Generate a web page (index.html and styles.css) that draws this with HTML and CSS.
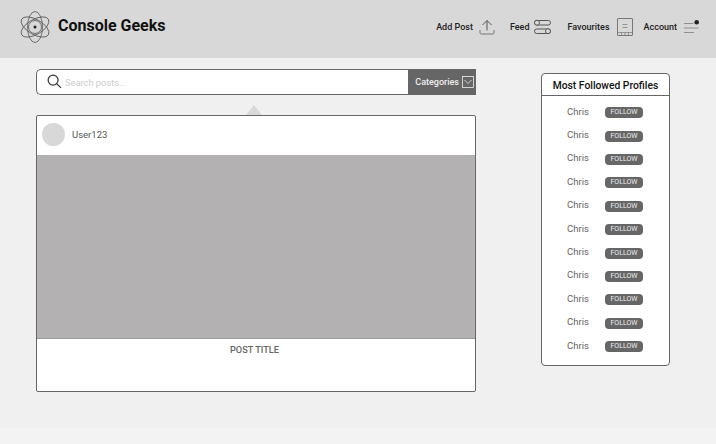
FILE: index.html
```html
<!DOCTYPE html>
<html lang="en">
<head>
<meta charset="utf-8">
<title>Console Geeks</title>
<link rel="stylesheet" href="styles.css">
</head>
<body>
<div class="page">
  <header class="topbar">
    <div class="brand">
      <svg class="logo" width="32" height="32" viewBox="0 0 32 32" fill="none" stroke="#555" stroke-width="0.8">
        <ellipse cx="16" cy="16" rx="15.5" ry="7.5" transform="rotate(90 16 16)"/>
        <ellipse cx="16" cy="16" rx="15.5" ry="7.5" transform="rotate(30 16 16)"/>
        <ellipse cx="16" cy="16" rx="15.5" ry="7.5" transform="rotate(150 16 16)"/>
        <circle cx="16" cy="16" r="6.5"/>
        <circle cx="16" cy="16" r="1.5" fill="#222" stroke="none"/>
      </svg>
      <span class="brand-name">Console Geeks</span>
    </div>
    <nav class="nav">
      <a class="nav-item nav-add">Add Post
        <svg width="16" height="16" viewBox="0 0 16 16" fill="none" stroke="#555" stroke-width="1">
          <path d="M8 11.5V1.5M3.5 6L8 1.5L12.5 6"/>
          <path d="M1 11v3a1.2 1.2 0 0 0 1.2 1h11.6a1.2 1.2 0 0 0 1.2-1v-3" stroke="#777"/>
        </svg>
      </a>
      <a class="nav-item nav-feed">Feed
        <svg width="17" height="16" viewBox="0 0 17 16" fill="none" stroke="#555" stroke-width="1">
          <rect x="0.5" y="1.5" width="16" height="4.5" rx="2.2"/>
          <circle cx="3" cy="3.7" r="2.5" fill="#d8d8d8"/>
          <rect x="0.5" y="10" width="16" height="4.5" rx="2.2"/>
          <circle cx="14" cy="12.2" r="2.5" fill="#d8d8d8"/>
        </svg>
      </a>
      <a class="nav-item nav-fav">Favourites
        <svg width="16" height="18" viewBox="0 0 16 18" fill="none" stroke="#777" stroke-width="1">
          <rect x="0.5" y="0.5" width="15" height="17" rx="0.5"/>
          <path d="M5.5 6.5h5M5.5 9.5h5M0.5 14.5h15M4.5 14.5v3M8 14.5v3M11.5 14.5v3" stroke-width="0.7"/>
        </svg>
      </a>
      <a class="nav-item nav-account">Account
        <svg width="15" height="14" viewBox="0 0 15 14" fill="none" stroke="#888" stroke-width="0.9">
          <path d="M0 3.5h9.5M0 8h14.5M0 12.5h10"/>
          <circle cx="12.7" cy="2.3" r="2.3" fill="#222" stroke="none"/>
        </svg>
      </a>
    </nav>
  </header>

  <main class="content">
    <section class="feed">
      <div class="search">
        <div class="search-input">
          <svg width="15" height="15" viewBox="0 0 16 16" fill="none" stroke="#333" stroke-width="1.3">
            <circle cx="6.5" cy="6.5" r="5.3"/>
            <path d="M10.5 10.5L15 14.8"/>
          </svg>
          <span class="placeholder">Search posts...</span>
        </div>
        <div class="categories">
          <span>Categories</span>
          <svg width="12" height="12" viewBox="0 0 12 12" fill="none" stroke="#eee" stroke-width="0.8">
            <rect x="0.5" y="0.5" width="11" height="11"/>
            <path d="M2.5 4L6 7.5L9.5 4"/>
          </svg>
        </div>
      </div>
      <div class="caret"></div>
      <article class="post">
        <div class="post-head">
          <div class="avatar"></div>
          <span class="user">User123</span>
        </div>
        <div class="post-image"></div>
        <div class="post-title">POST TITLE</div>
      </article>
    </section>

    <aside class="profiles">
      <h2 class="profiles-title">Most Followed Profiles</h2>
      <ul class="profile-list">
        <li class="profile"><span class="profile-name">Chris</span><span class="follow">FOLLOW</span></li>
        <li class="profile"><span class="profile-name">Chris</span><span class="follow">FOLLOW</span></li>
        <li class="profile"><span class="profile-name">Chris</span><span class="follow">FOLLOW</span></li>
        <li class="profile"><span class="profile-name">Chris</span><span class="follow">FOLLOW</span></li>
        <li class="profile"><span class="profile-name">Chris</span><span class="follow">FOLLOW</span></li>
        <li class="profile"><span class="profile-name">Chris</span><span class="follow">FOLLOW</span></li>
        <li class="profile"><span class="profile-name">Chris</span><span class="follow">FOLLOW</span></li>
        <li class="profile"><span class="profile-name">Chris</span><span class="follow">FOLLOW</span></li>
        <li class="profile"><span class="profile-name">Chris</span><span class="follow">FOLLOW</span></li>
        <li class="profile"><span class="profile-name">Chris</span><span class="follow">FOLLOW</span></li>
        <li class="profile"><span class="profile-name">Chris</span><span class="follow">FOLLOW</span></li>
      </ul>
    </aside>
  </main>
</div>
</body>
</html>
```

FILE: styles.css
```css
* { box-sizing: border-box; }

html, body {
  margin: 0;
  padding: 0;
}

body {
  background: #f3f3f3;
  font-family: Roboto, "Liberation Sans", sans-serif;
  color: #555;
}

.page {
  width: 716px;
  height: 444px;
  overflow: hidden;
}

.topbar {
  height: 58px;
  background: #d8d8d8;
  display: flex;
  align-items: center;
  justify-content: space-between;
  padding: 0 17px 4px 19px;
}

.brand {
  display: flex;
  align-items: center;
  gap: 7px;
}

.brand-name {
  font-size: 16px;
  font-weight: 700;
  color: #111;
  margin-top: -4px;
}

.nav {
  display: flex;
  align-items: center;
}

.nav-item {
  display: flex;
  align-items: center;
  font-size: 9px;
  font-weight: 500;
  color: #222;
}

.nav-add { margin-right: 15px; gap: 6px; }
.nav-feed { margin-right: 16px; gap: 5px; }
.nav-fav { margin-right: 11px; gap: 7px; }
.nav-account { gap: 7px; }

.content {
  height: 370px;
  background: #f0f0f0;
  display: flex;
  align-items: flex-start;
  padding: 11px 46px 0 36px;
  justify-content: space-between;
}

.feed {
  width: 440px;
  display: flex;
  flex-direction: column;
}

.search {
  height: 26px;
  display: flex;
}

.search-input {
  flex: 1;
  display: flex;
  align-items: center;
  gap: 3px;
  padding: 0 0 2px 10px;
  background: #fff;
  border: 1px solid #666;
  border-right: none;
  border-radius: 5px 0 0 5px;
}

.placeholder {
  font-size: 9.3px;
  color: #ccc;
  margin-top: 3px;
}

.categories {
  width: 68px;
  background: #666;
  color: #eee;
  font-size: 9px;
  font-weight: 500;
  display: flex;
  align-items: center;
  justify-content: flex-end;
  gap: 3px;
  padding-right: 2px;
}

.caret {
  align-self: flex-start;
  margin: 10px 0 0 210px;
  width: 0;
  height: 0;
  border-left: 8px solid transparent;
  border-right: 8px solid transparent;
  border-bottom: 10px solid #d8d8d8;
}

.post {
  height: 277px;
  background: #fff;
  border: 1px solid #666;
  border-radius: 2px;
  display: flex;
  flex-direction: column;
}

.post-head {
  height: 39px;
  display: flex;
  align-items: center;
  padding: 0 0 2px 5px;
  gap: 7px;
}

.avatar {
  width: 23px;
  height: 23px;
  border-radius: 50%;
  background: #d8d8d8;
}

.user {
  font-size: 9.5px;
  color: #555;
  font-weight: 400;
}

.post-image {
  height: 184px;
  background: #b3b1b1;
  border-bottom: 1px solid #999;
}

.post-title {
  font-size: 9.2px;
  font-weight: 500;
  color: #666;
  text-align: center;
  padding: 5px 3px 0 0;
}

.profiles {
  width: 129px;
  height: 293px;
  margin-top: 4px;
  background: #fff;
  border: 1px solid #666;
  border-radius: 4px;
}

.profiles-title {
  height: 22px;
  margin: 0;
  font-size: 10.3px;
  font-weight: 500;
  color: #111;
  line-height: 23px;
  text-align: center;
  border-bottom: 1px solid #666;
}

.profile-list {
  list-style: none;
  margin: 0;
  padding: 4px 0 0;
}

.profile {
  height: 23.4px;
  display: flex;
  align-items: center;
  padding-left: 25px;
}

.profile-name {
  width: 38px;
  font-size: 9.5px;
  color: #666;
  margin-top: -1px;
}

.follow {
  width: 38px;
  height: 11px;
  border-radius: 4px;
  background: #666;
  color: #eee;
  font-size: 7px;
  font-weight: 400;
  line-height: 11px;
  text-align: center;
  margin-top: 2px;
}
```
